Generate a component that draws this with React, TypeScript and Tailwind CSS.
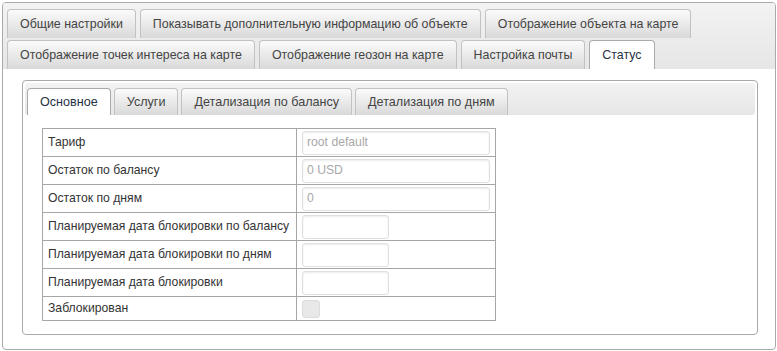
import React from "react";

const topTabs = [
    ["Общие настройки", "Показывать дополнительную информацию об объекте", "Отображение объекта на карте"],
    ["Отображение точек интереса на карте", "Отображение геозон на карте", "Настройка почты", "Статус"]
];

const innerTabs = ["Основное", "Услуги", "Детализация по балансу", "Детализация по дням"];

type Row = {
    label: string;
    kind: "wide" | "short" | "check";
    value?: string;
};

const rows: Row[] = [
    { label: "Тариф", kind: "wide", value: "root default" },
    { label: "Остаток по балансу", kind: "wide", value: "0 USD" },
    { label: "Остаток по дням", kind: "wide", value: "0" },
    { label: "Планируемая дата блокировки по балансу", kind: "short" },
    { label: "Планируемая дата блокировки по дням", kind: "short" },
    { label: "Планируемая дата блокировки", kind: "short" },
    { label: "Заблокирован", kind: "check" }
];

function Tab({ label, active, size }: { label: string; active?: boolean; size: string }) {
    return (
        <div
            className={
                "flex items-center px-3 border border-b-0 rounded-t-[4px] whitespace-nowrap " +
                size + " " +
                (active
                    ? "bg-white border-[#aaaaaa] text-[#1f3246]"
                    : "bg-gradient-to-b from-[#fbfbfb] to-[#d9d9d9] border-[#c2c2c2] text-[#444444]")
            }
        >
            {label}
        </div>
    );
}

export default function App() {
    return (
        <div
            className="w-[777px] h-[351px] bg-white pl-[2px] pt-[2px] text-[12.2px] leading-none"
            style={{ fontFamily: '"Liberation Sans", Arial, sans-serif' }}
        >
            <div className="w-[774px] h-[348px] border border-[#aaaaaa] rounded-[4px] flex flex-col overflow-hidden">

                {/* outer tab bar */}
                <div className="bg-gradient-to-b from-[#f3f3f3] to-[#e6e6e6] pt-[6px] px-[4px] flex flex-col gap-[2px]">
                    {topTabs.map((line, i) => (
                        <div key={i} className="flex gap-[4px]">
                            {line.map(t => (
                                <Tab key={t} label={t} active={t === "Статус"} size="h-[29px] text-[12.4px]" />
                            ))}
                        </div>
                    ))}
                </div>

                {/* outer content */}
                <div className="flex-1 pt-[11px] pl-[19px] pr-[17px] pb-[14px]">
                    <div className="h-full border border-[#aaaaaa] rounded-[4px] p-[2px] flex flex-col">

                        <div className="bg-gradient-to-b from-[#f3f3f3] to-[#e6e6e6] rounded-[3px] pt-[5px] px-[2px] flex gap-[3px]">
                            {innerTabs.map((t, i) => (
                                <Tab key={t} label={t} active={i === 0} size="h-[27px] text-[12.6px]" />
                            ))}
                        </div>

                        <div className="pt-[13px] pl-[17px]">
                            <table className="border-collapse">
                                <tbody>
                                    {rows.map(r => (
                                        <tr key={r.label} className={r.kind === "check" ? "h-[24px]" : "h-[28px]"}>
                                            <td className="w-[254px] border border-[#a6a6a6] pl-[5px] text-[#333333] whitespace-nowrap">
                                                {r.label}
                                            </td>
                                            <td className="w-[199px] border border-[#a6a6a6] pl-[5px] py-0">
                                                {r.kind === "check" ? (
                                                    <div className="w-[18px] h-[18px] rounded-[3px] border border-[#dcdcdc] bg-[#e8e8e8]" />
                                                ) : (
                                                    <div
                                                        className={
                                                            "h-[24px] rounded-[3px] border border-[#e0e0e0] shadow-[inset_0_1px_2px_rgba(0,0,0,0.08)] flex items-center pl-[4px] text-[#a8a8a8] " +
                                                            (r.kind === "wide" ? "w-[188px]" : "w-[87px]")
                                                        }
                                                    >
                                                        {r.value}
                                                    </div>
                                                )}
                                            </td>
                                        </tr>
                                    ))}
                                </tbody>
                            </table>
                        </div>

                    </div>
                </div>

            </div>
        </div>
    );
}
